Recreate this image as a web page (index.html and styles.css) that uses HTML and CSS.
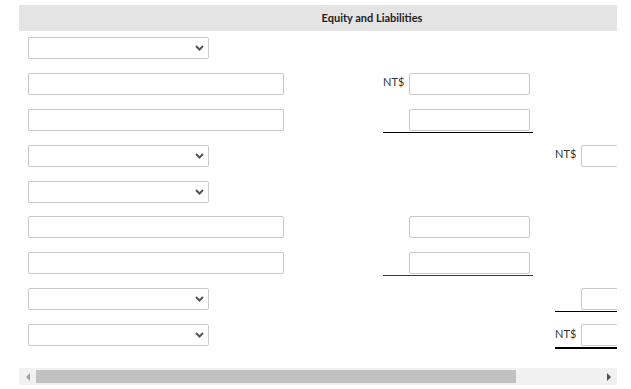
FILE: index.html
```html
<!DOCTYPE html>
<html>
<head>
<meta charset="utf-8">
<link rel="stylesheet" href="styles.css">
</head>
<body>
<div class="frame">
  <div class="viewport">
    <div class="sheet">
      <div class="head">Equity and Liabilities</div>
      <div class="rows">
        <div class="row">
          <div class="c1"><div class="sel"><select></select><svg class="chev" width="9" height="6" viewBox="0 0 9 6"><polyline points="1,1 4.5,4.5 8,1" fill="none" stroke="#555" stroke-width="2"/></svg></div></div>
          <div class="c2"></div><div class="c3"></div>
        </div>
        <div class="row">
          <div class="c1"><input class="txt" type="text"></div>
          <div class="c2 amt"><span class="cur">NT$</span><input class="num" type="text"></div>
          <div class="c3"></div>
        </div>
        <div class="row">
          <div class="c1"><input class="txt" type="text"></div>
          <div class="c2 amt line"><span class="cur"></span><input class="num" type="text"></div>
          <div class="c3"></div>
        </div>
        <div class="row">
          <div class="c1"><div class="sel"><select></select><svg class="chev" width="9" height="6" viewBox="0 0 9 6"><polyline points="1,1 4.5,4.5 8,1" fill="none" stroke="#555" stroke-width="2"/></svg></div></div>
          <div class="c2"></div>
          <div class="c3 amt"><span class="cur">NT$</span><input class="num" type="text"></div>
        </div>
        <div class="row">
          <div class="c1"><div class="sel"><select></select><svg class="chev" width="9" height="6" viewBox="0 0 9 6"><polyline points="1,1 4.5,4.5 8,1" fill="none" stroke="#555" stroke-width="2"/></svg></div></div>
          <div class="c2"></div><div class="c3"></div>
        </div>
        <div class="row">
          <div class="c1"><input class="txt" type="text"></div>
          <div class="c2 amt"><span class="cur"></span><input class="num" type="text"></div>
          <div class="c3"></div>
        </div>
        <div class="row">
          <div class="c1"><input class="txt" type="text"></div>
          <div class="c2 amt line slate"><span class="cur"></span><input class="num" type="text"></div>
          <div class="c3"></div>
        </div>
        <div class="row">
          <div class="c1"><div class="sel"><select></select><svg class="chev" width="9" height="6" viewBox="0 0 9 6"><polyline points="1,1 4.5,4.5 8,1" fill="none" stroke="#555" stroke-width="2"/></svg></div></div>
          <div class="c2"></div>
          <div class="c3 amt line"><span class="cur"></span><input class="num" type="text"></div>
        </div>
        <div class="row">
          <div class="c1"><div class="sel"><select></select><svg class="chev" width="9" height="6" viewBox="0 0 9 6"><polyline points="1,1 4.5,4.5 8,1" fill="none" stroke="#555" stroke-width="2"/></svg></div></div>
          <div class="c2"></div>
          <div class="c3 amt total"><span class="cur">NT$</span><input class="num" type="text"></div>
        </div>
      </div>
    </div>
  </div>
  <div class="hscroll">
    <div class="sbtn"><span class="tri-left"></span></div>
    <div class="track"><div class="thumb"></div></div>
    <div class="sbtn"><span class="tri-right"></span></div>
  </div>
</div>
</body>
</html>
```
FILE: styles.css
```css
html, body {
  margin: 0;
  padding: 0;
  background: #fff;
}
body {
  font-family: Lato, "Liberation Sans", sans-serif;
  color: #333;
}
.frame {
  margin: 5px 0 0 19px;
  width: 598px;
}
.viewport {
  width: 598px;
  height: 363px;
  overflow: hidden;
}
.sheet {
  width: 706px;
}
.head {
  height: 26px;
  line-height: 26px;
  background: #e4e4e4;
  text-align: center;
  font-weight: bold;
  font-size: 11px;
  color: #222;
}
.rows {
  padding: 6px 20px 0 9px;
}
.row {
  display: grid;
  grid-template-columns: 333px 150px 150px;
  column-gap: 22px;
  height: 35.875px;
  align-items: start;
}
.sel {
  position: relative;
  width: 181px;
  height: 22px;
}
.sel select {
  appearance: none;
  -webkit-appearance: none;
  box-sizing: border-box;
  width: 181px;
  height: 22px;
  margin: 0;
  border: 1px solid #c9c9c9;
  border-radius: 2px;
  background: #fff;
  display: block;
}
.chev {
  position: absolute;
  right: 5px;
  top: 8px;
}
.txt, .num {
  box-sizing: border-box;
  height: 22px;
  margin: 0;
  padding: 0 4px;
  border: 1px solid #c9c9c9;
  border-radius: 2px;
  background: #fff;
  display: block;
  font: 11px Lato, sans-serif;
}
.txt {
  width: 256px;
}
.num {
  width: 121px;
}
.amt {
  display: flex;
  align-items: center;
}
.cur {
  width: 26px;
  flex: none;
  font-size: 11px;
  line-height: 14px;
  padding-bottom: 3px;
}
.line {
  padding-bottom: 1px;
  border-bottom: 1px solid #000;
}
.line.slate {
  border-bottom-color: #2f3d48;
}
.total {
  padding-bottom: 1px;
  border-bottom: 2px solid #000;
}
.hscroll {
  display: flex;
  height: 17px;
  background: #f1f1f1;
}
.sbtn {
  width: 17px;
  flex: none;
  display: flex;
  align-items: center;
  justify-content: center;
}
.tri-left {
  width: 0;
  height: 0;
  border-top: 4px solid transparent;
  border-bottom: 4px solid transparent;
  border-right: 4px solid #a3a3a3;
}
.tri-right {
  width: 0;
  height: 0;
  border-top: 4px solid transparent;
  border-bottom: 4px solid transparent;
  border-left: 4px solid #505050;
}
.track {
  flex: 1;
  padding-top: 2px;
}
.thumb {
  width: 480px;
  height: 13px;
  background: #c1c1c1;
}
```
